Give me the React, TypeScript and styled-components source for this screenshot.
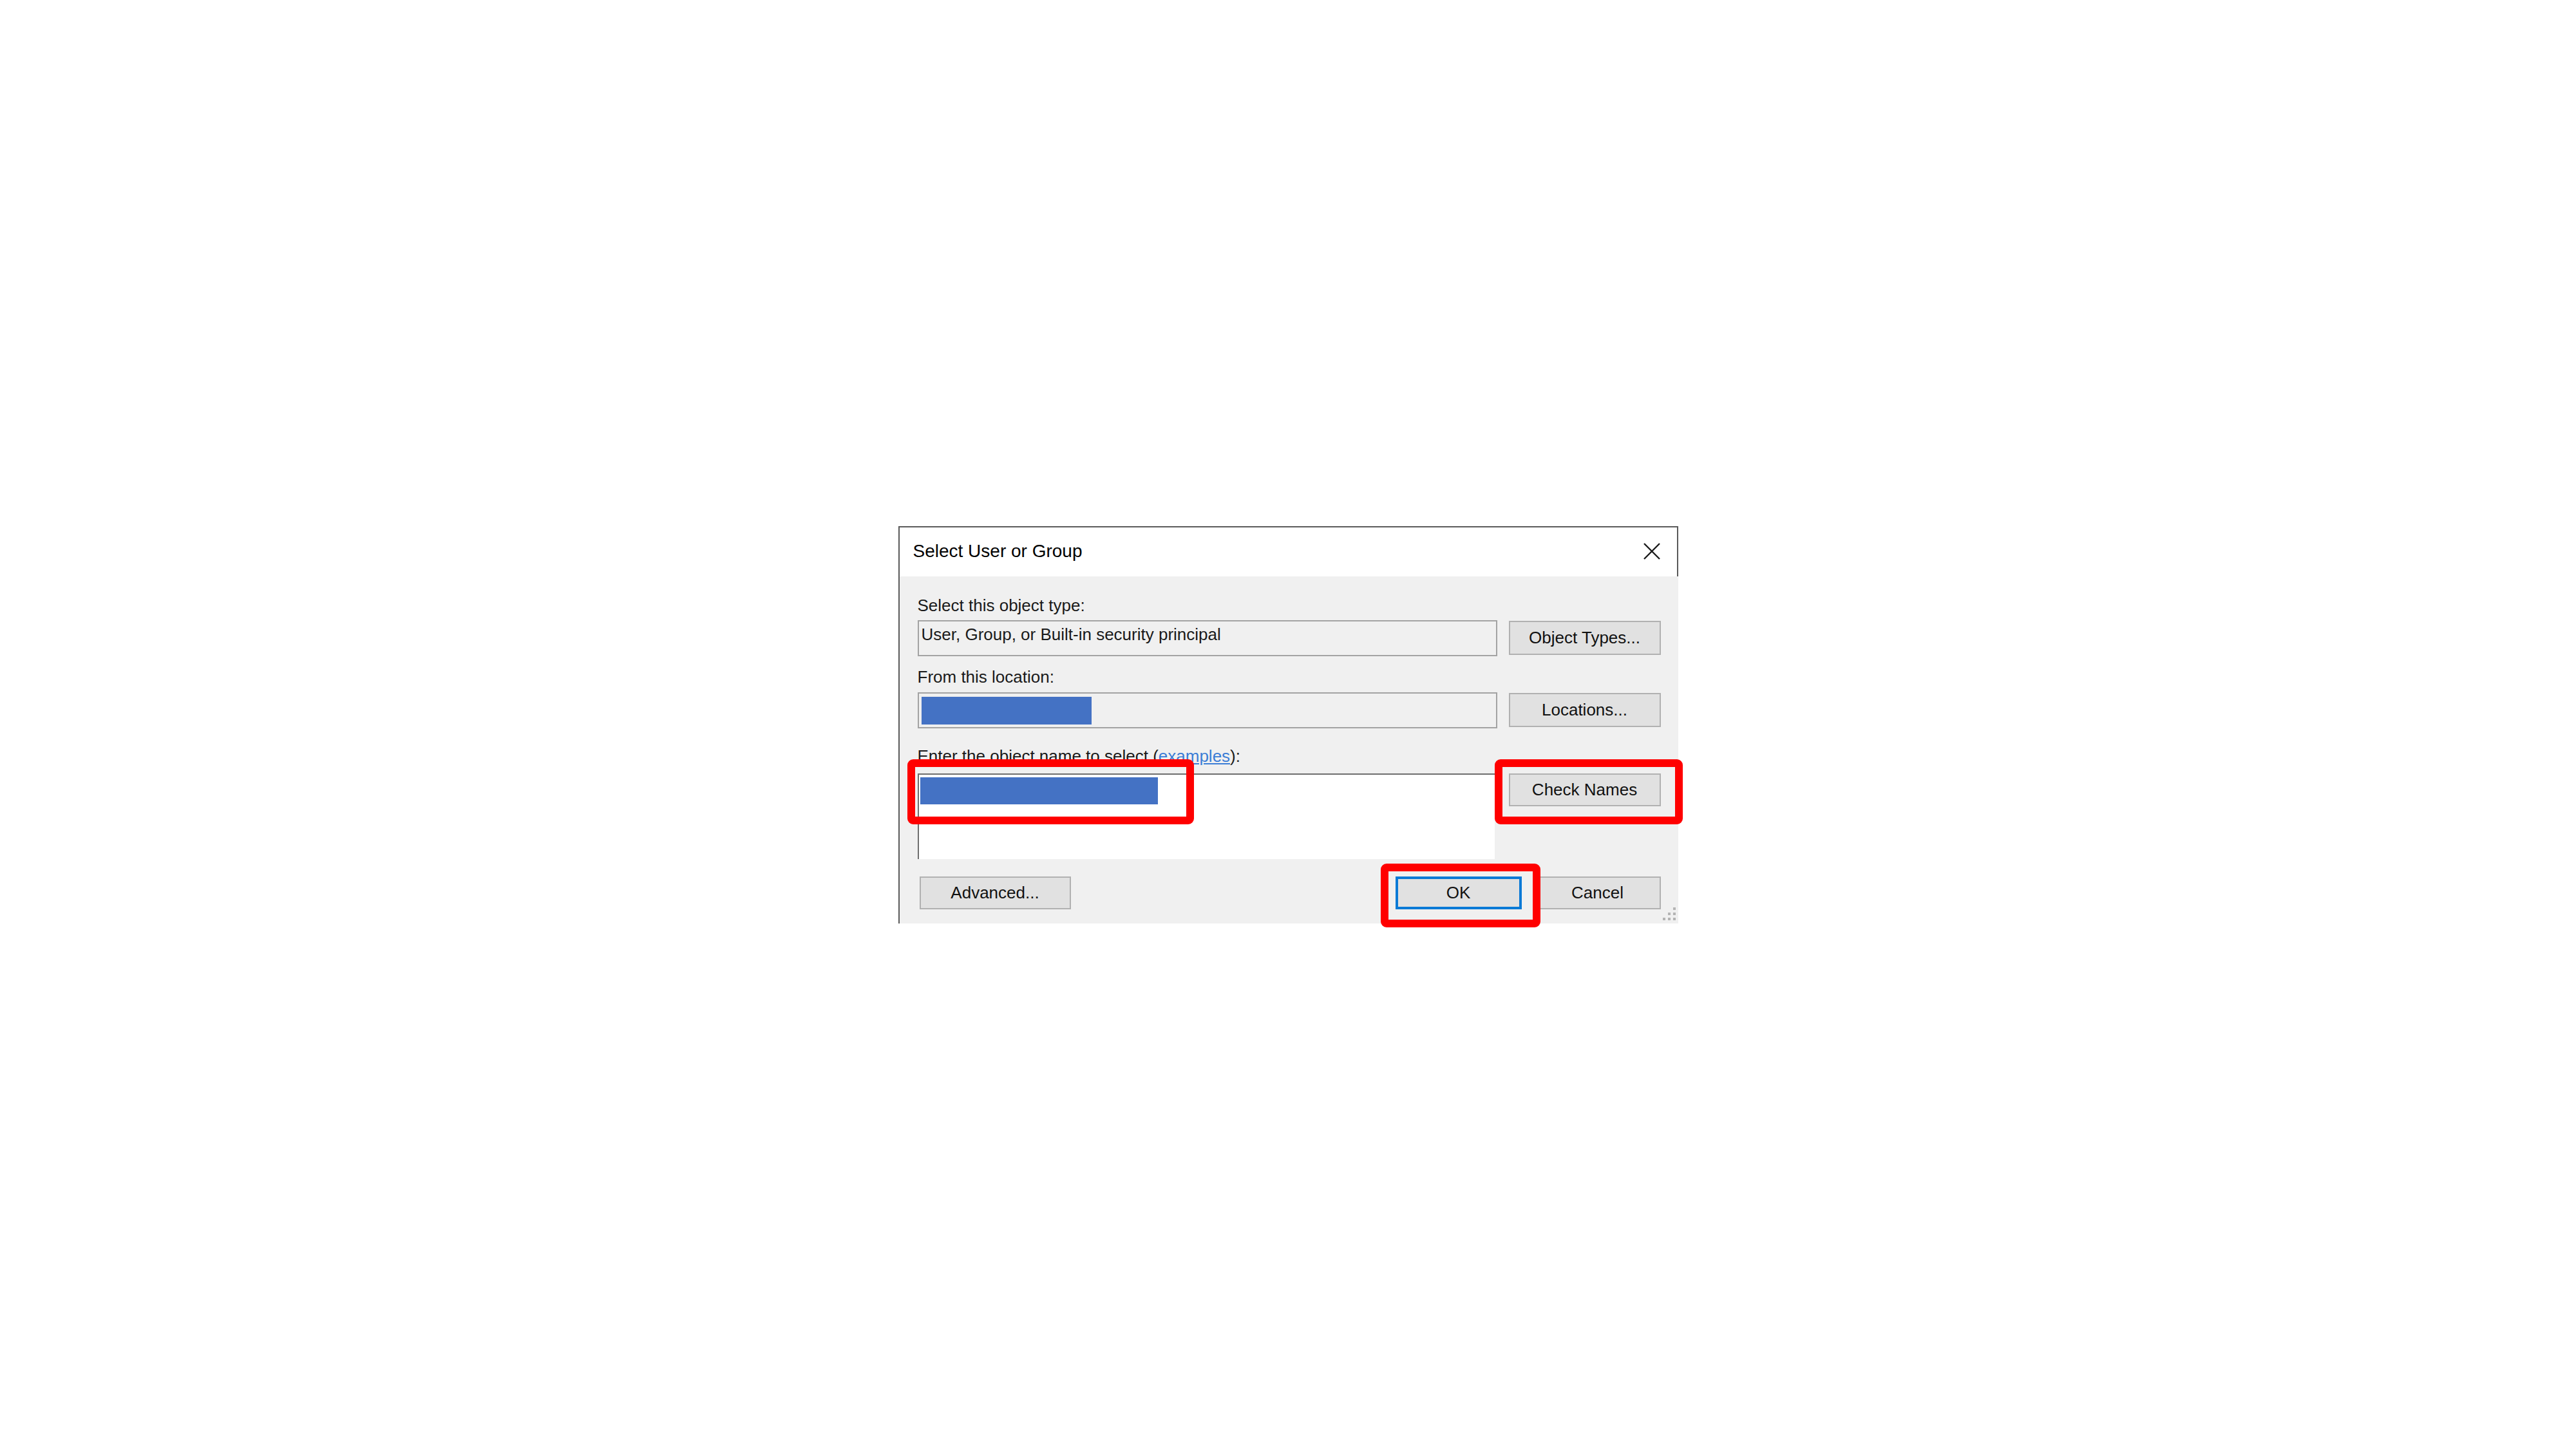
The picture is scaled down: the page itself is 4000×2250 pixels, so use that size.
import React from 'react';
import styled, { createGlobalStyle } from 'styled-components';

// styles
const GlobalStyle = createGlobalStyle`
  html, body {
    margin: 0;
    padding: 0;
    background-color: #ffffff;
  }
  body {
    font-family: 'Liberation Sans', Arial, sans-serif;
  }
`;

const Page = styled.main`
  width: 100%;
  height: 100vh;
  display: flex;
  justify-content: center;
  align-items: center;
`;

const Dialog = styled.section`
  width: 1211px;
  position: relative;
  display: flex;
  flex-direction: column;
  border-top: 2px solid #5a5a5a;
  border-left: 2px solid #5a5a5a;
  box-sizing: border-box;
`;

const TitleBar = styled.header`
  height: 76px;
  display: flex;
  align-items: center;
  justify-content: space-between;
  padding: 0 24px 2px 21px;
  box-sizing: border-box;
  background-color: #ffffff;
  border-right: 2px solid #5a5a5a;
`;

const Title = styled.h1`
  margin: 0;
  font-size: 28px;
  font-weight: 400;
  color: #000000;
  line-height: 30px;
`;

const CloseButton = styled.button`
  width: 30px;
  height: 30px;
  padding: 0;
  display: flex;
  align-items: center;
  justify-content: center;
  border: none;
  background: transparent;
`;

const Body = styled.div`
  position: relative;
  display: flex;
  flex-direction: column;
  padding: 30px 27px 22px 28px;
  background-color: #f0f0f0;
`;

const FieldGroup = styled.div<{ $top?: number; $gap: number }>`
  display: flex;
  flex-direction: column;
  gap: ${(p) => p.$gap}px;
  margin-top: ${(p) => p.$top ?? 0}px;
`;

const Label = styled.label`
  font-size: 26px;
  line-height: 30px;
  color: #1a1a1a;
  white-space: nowrap;
`;

const Link = styled.a`
  color: #3b7dd6;
  text-decoration: underline;
`;

const Row = styled.div<{ $align?: string; $gap?: number }>`
  display: flex;
  align-items: ${(p) => p.$align ?? 'center'};
  gap: ${(p) => p.$gap ?? 18}px;
`;

const ReadOnlyField = styled.div`
  width: 900px;
  height: 56px;
  box-sizing: border-box;
  padding: 5px 4px 0;
  border: 2px solid #a3a3a3;
  background-color: #f0f0f0;
  font-size: 26px;
  line-height: 30px;
  color: #1a1a1a;
`;

const NameBox = styled.div`
  width: 896px;
  height: 133px;
  box-sizing: border-box;
  padding: 4px 2px 0;
  border-top: 2px solid #6e6e6e;
  border-left: 2px solid #6e6e6e;
  background-color: #ffffff;
`;

const Redacted = styled.div<{ $w: number; $h: number }>`
  width: ${(p) => p.$w}px;
  height: ${(p) => p.$h}px;
  background-color: #4472c4;
`;

const Button = styled.button<{ $w: number; $h?: number; $default?: boolean }>`
  width: ${(p) => p.$w}px;
  height: ${(p) => p.$h ?? 51}px;
  flex-shrink: 0;
  padding: 0;
  box-sizing: border-box;
  background-color: #e1e1e1;
  border: ${(p) => (p.$default ? '4px solid #0a7ad6' : '2px solid #b1b1b1')};
  font-family: 'Liberation Sans', Arial, sans-serif;
  font-size: 26px;
  color: #111111;
`;

const Footer = styled.div`
  display: flex;
  justify-content: space-between;
  align-items: center;
  margin-top: 27px;
  padding-left: 3px;
`;

const ButtonGroup = styled.div`
  display: flex;
  gap: 20px;
`;

const Grip = styled.svg`
  position: absolute;
  right: 2px;
  bottom: 3px;
`;

const Callout = styled.div<{ $left: number; $top: number; $w: number; $h: number }>`
  position: absolute;
  left: ${(p) => p.$left}px;
  top: ${(p) => p.$top}px;
  width: ${(p) => p.$w}px;
  height: ${(p) => p.$h}px;
  box-sizing: border-box;
  border: 12px solid #ff0000;
  border-radius: 9px;
  pointer-events: none;
`;

// logic
const App = () => {
  return (
    <Page>
      <GlobalStyle />
      <Dialog>
        <TitleBar>
          <Title>Select User or Group</Title>
          <CloseButton aria-label="Close">
            <svg width="28" height="28" viewBox="0 0 28 28">
              <path d="M2 2 L26 26 M26 2 L2 26" stroke="#1a1a1a" strokeWidth="2.4" fill="none" />
            </svg>
          </CloseButton>
        </TitleBar>
        <Body>
          <FieldGroup $gap={8}>
            <Label>Select this object type:</Label>
            <Row>
              <ReadOnlyField>User, Group, or Built-in security principal</ReadOnlyField>
              <Button $w={236} $h={53}>Object Types...</Button>
            </Row>
          </FieldGroup>
          <FieldGroup $top={17} $gap={9}>
            <Label>From this location:</Label>
            <Row>
              <ReadOnlyField>
                <Redacted $w={264} $h={43} />
              </ReadOnlyField>
              <Button $w={236} $h={53}>Locations...</Button>
            </Row>
          </FieldGroup>
          <FieldGroup $top={28} $gap={12}>
            <Label>
              Enter the object name to select (<Link>examples</Link>):
            </Label>
            <Row $align="flex-start" $gap={22}>
              <NameBox>
                <Redacted $w={369} $h={42} />
              </NameBox>
              <Button $w={236}>Check Names</Button>
            </Row>
          </FieldGroup>
          <Footer>
            <Button $w={235}>Advanced...</Button>
            <ButtonGroup>
              <Button $w={196} $default>OK</Button>
              <Button $w={196}>Cancel</Button>
            </ButtonGroup>
          </Footer>
          <Grip width="24" height="24" viewBox="0 0 24 24">
            <g fill="#b4b4b4">
              <rect x="18" y="2" width="4" height="4" />
              <rect x="10" y="10" width="4" height="4" />
              <rect x="18" y="10" width="4" height="4" />
              <rect x="2" y="18" width="4" height="4" />
              <rect x="10" y="18" width="4" height="4" />
              <rect x="18" y="18" width="4" height="4" />
            </g>
          </Grip>
        </Body>
        <Callout $left={12} $top={360} $w={445} $h={101} />
        <Callout $left={924} $top={360} $w={292} $h={101} />
        <Callout $left={747} $top={522} $w={248} $h={99} />
      </Dialog>
    </Page>
  );
};

export default App;
